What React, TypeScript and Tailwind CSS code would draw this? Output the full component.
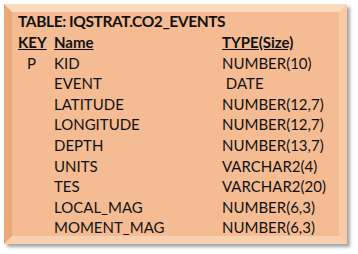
const columns = [
  { key: "P", name: "KID", type: "NUMBER(10)" },
  { key: "", name: "EVENT", type: "\u00a0DATE" },
  { key: "", name: "LATITUDE", type: "NUMBER(12,7)" },
  { key: "", name: "LONGITUDE", type: "NUMBER(12,7)" },
  { key: "", name: "DEPTH", type: "NUMBER(13,7)" },
  { key: "", name: "UNITS", type: "VARCHAR2(4)" },
  { key: "", name: "TES", type: "VARCHAR2(20)" },
  { key: "", name: "LOCAL_MAG", type: "NUMBER(6,3)" },
  { key: "", name: "MOMENT_MAG", type: "NUMBER(6,3)" },
];

const App = () => {
  return (
    <div className="w-[358px] h-[254px] bg-white p-1 font-['Lato','Liberation_Sans',sans-serif] text-[#111]">
      <div className="w-[343px] h-[240px] border-[8px] border-t-[#fbdcbd] border-l-[#eba779] border-r-[#f8caa6] border-b-[#f9d0ad] bg-[#f5bc94] shadow-[3px_3px_3px_rgba(0,0,0,0.35)]">
        <div className="pl-[6px] -mt-[1px]">
          <div className="h-[21px] leading-[21px] text-[15.5px] tracking-[-0.4px] font-bold">TABLE: IQSTRAT.CO2_EVENTS</div>
          <div className="grid grid-cols-[36px_168px_1fr] text-[15px] leading-[20.6px]">
            <div className="font-bold underline">KEY</div>
            <div className="font-bold underline">Name</div>
            <div className="font-bold underline">TYPE(Size)</div>
            {columns.map((c) => (
              <>
                <div className="pl-[9px]">{c.key}</div>
                <div>{c.name}</div>
                <div>{c.type}</div>
              </>
            ))}
          </div>
        </div>
      </div>
    </div>
  );
};

export default App;
